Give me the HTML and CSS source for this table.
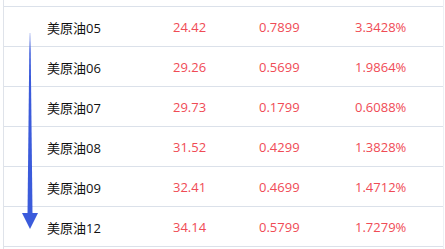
FILE: index.html
```html
<!DOCTYPE html>
<html lang="zh-CN">
<head>
  <meta charset="UTF-8" />
  <title>美原油</title>
  <link rel="stylesheet" href="styles.css">
</head>
<body>
  <div class="quote-list">
    <div class="row-cut"></div>
    <div class="row">
      <div class="name">美原油05</div>
      <div class="num">24.42</div>
      <div class="num">0.7899</div>
      <div class="num">3.3428%</div>
    </div>
    <div class="row">
      <div class="name">美原油06</div>
      <div class="num">29.26</div>
      <div class="num">0.5699</div>
      <div class="num">1.9864%</div>
    </div>
    <div class="row">
      <div class="name">美原油07</div>
      <div class="num">29.73</div>
      <div class="num">0.1799</div>
      <div class="num">0.6088%</div>
    </div>
    <div class="row">
      <div class="name">美原油08</div>
      <div class="num">31.52</div>
      <div class="num">0.4299</div>
      <div class="num">1.3828%</div>
    </div>
    <div class="row">
      <div class="name">美原油09</div>
      <div class="num">32.41</div>
      <div class="num">0.4699</div>
      <div class="num">1.4712%</div>
    </div>
    <div class="row">
      <div class="name">美原油12</div>
      <div class="num">34.14</div>
      <div class="num">0.5799</div>
      <div class="num">1.7279%</div>
    </div>
    <div class="row-tail"></div>

    <!-- scroll hint arrow -->
    <svg class="arrow" width="20" height="200" viewBox="0 0 20 200">
      <defs>
        <linearGradient id="shaft" x1="0" y1="0" x2="0" y2="1">
          <stop offset="0" stop-color="#3b5bdb" stop-opacity="0.3"/>
          <stop offset="0.1" stop-color="#3b5bdb" stop-opacity="1"/>
          <stop offset="1" stop-color="#3b5bdb" stop-opacity="1"/>
        </linearGradient>
      </defs>
      <polygon points="8.5,0 9.5,0 11.5,181 6.5,181" fill="url(#shaft)"/>
      <polygon points="1,180 17,180 9,196" fill="#3b5bdb"/>
    </svg>
  </div>
</body>
</html>
```

FILE: styles.css
```css
body {
  margin: 0;
  background: #fff;
  font-family: "Open Sans", "Noto Sans CJK SC", sans-serif;
  font-size: 13px;
}

.quote-list {
  position: relative;
  margin-left: 3px;
  width: 439px;
  border-left: 1px solid #dfe3ea;
  border-right: 1px solid #eef0f4;
}

.row-cut {
  height: 6px;
  border-bottom: 1px solid #dbe1ea;
}

.row {
  display: grid;
  grid-template-columns: 126px 86px 96px 1fr;
  align-items: center;
  height: 38px;
  padding-top: 1px;
  padding-left: 43px;
  border-bottom: 1px solid #dbe1ea;
}

.row-tail {
  height: 3px;
}

.name {
  color: #111;
}

.num {
  color: #f04b55;
}

.arrow {
  position: absolute;
  left: 17px;
  top: 33px;
}
```
